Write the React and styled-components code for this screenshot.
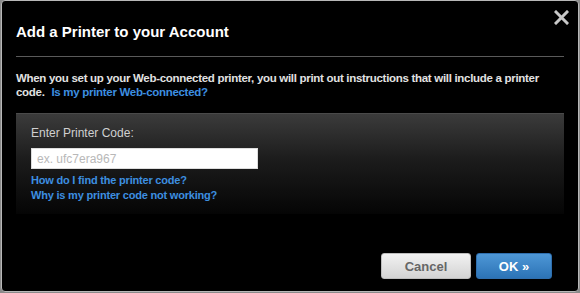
import React from "react";
import styled, { createGlobalStyle } from "styled-components";

const Global = createGlobalStyle`
  html, body { margin: 0; padding: 0; background: #8a8a8a; }
  body { font-family: "Liberation Sans", Arial, sans-serif; }
  * { box-sizing: border-box; }
`;

const Dialog = styled.div`
  position: relative;
  margin-left: 1px;
  width: 578px;
  height: 292px;
  background: #000;
  border: 1px solid #b8b8b8;
  border-radius: 4px;
  padding: 0 14px 0 14px;
  display: flex;
  flex-direction: column;
`;

const Title = styled.h1`
  margin: 22px 0 0;
  font-size: 15px;
  line-height: 18px;
  font-weight: bold;
  color: #fff;
`;

const Rule = styled.hr`
  margin: 15px 0 0;
  border: 0;
  height: 1px;
  background: #5a5a5a;
`;

const Intro = styled.p`
  margin: 14px 0 0;
  font-size: 11.5px;
  line-height: 14px;
  font-weight: bold;
  letter-spacing: -0.3px;
  color: #e2e2e2;
`;

const Link = styled.a`
  color: #3d8fe0;
  font-weight: bold;
  text-decoration: none;
  margin-left: ${(p) => p.$indent || 0}px;
`;

const Panel = styled.section`
  margin-top: 14px;
  border-top: 1px solid #4a4a4a;
  background: linear-gradient(#3b3b3b, #1c1c1c 45%, #050505 100%);
  padding: 12px 14px 11px 15px;
  display: flex;
  flex-direction: column;
  align-items: flex-start;
`;

const Label = styled.label`
  font-size: 12px;
  line-height: 14px;
  color: #d0d0d0;
`;

const CodeInput = styled.input`
  margin-top: 8px;
  width: 227px;
  height: 21px;
  border: 1px solid #ddd;
  background: #fff;
  padding: 0 5px;
  font-family: "Liberation Sans", Arial, sans-serif;
  font-size: 12px;
  outline: none;
  &::placeholder { color: #b8b8b8; }
`;

const HelpLinks = styled.div`
  margin-top: 4px;
  display: flex;
  flex-direction: column;
  font-size: 11px;
  line-height: 15px;
  letter-spacing: -0.2px;
`;

const Footer = styled.div`
  margin-top: auto;
  margin-bottom: 12px;
  display: flex;
  justify-content: flex-end;
  gap: 5px;
  padding-right: 12px;
`;

const Button = styled.button`
  height: 26px;
  width: ${(p) => p.$w}px;
  border-radius: 3px;
  font-family: "Liberation Sans", Arial, sans-serif;
  font-size: 13px;
  font-weight: bold;
  cursor: pointer;
  border: 1px solid ${(p) => (p.$primary ? "#2f6fae" : "#bdbdbd")};
  color: ${(p) => (p.$primary ? "#fff" : "#666")};
  background: ${(p) =>
    p.$primary
      ? "linear-gradient(#4e97d6, #2c73b6)"
      : "linear-gradient(#f2f2f2, #d3d3d3)"};
`;

const Close = styled.button`
  position: absolute;
  top: 9px;
  right: 9px;
  width: 15px;
  height: 15px;
  padding: 0;
  border: 0;
  background: none;
  cursor: pointer;
  display: flex;
`;

export default function App() {
  return (
    <>
      <Global />
      <Dialog>
        <Close aria-label="Close">
          <svg width="15" height="15" viewBox="0 0 15 15">
            <path d="M2 2 L13 13 M13 2 L2 13" stroke="#c8c8c8" strokeWidth="3" strokeLinecap="square" />
          </svg>
        </Close>
        <Title>Add a Printer to your Account</Title>
        <Rule />
        <Intro>
          When you set up your Web-connected printer, you will print out instructions that will include a printer
          <br />
          code. <Link href="#" $indent={4}>Is my printer Web-connected?</Link>
        </Intro>
        <Panel>
          <Label>Enter Printer Code:</Label>
          <CodeInput placeholder="ex. ufc7era967" />
          <HelpLinks>
            <Link href="#">How do I find the printer code?</Link>
            <Link href="#">Why is my printer code not working?</Link>
          </HelpLinks>
        </Panel>
        <Footer>
          <Button $w={90}>Cancel</Button>
          <Button $primary $w={76}>OK »</Button>
        </Footer>
      </Dialog>
    </>
  );
}
